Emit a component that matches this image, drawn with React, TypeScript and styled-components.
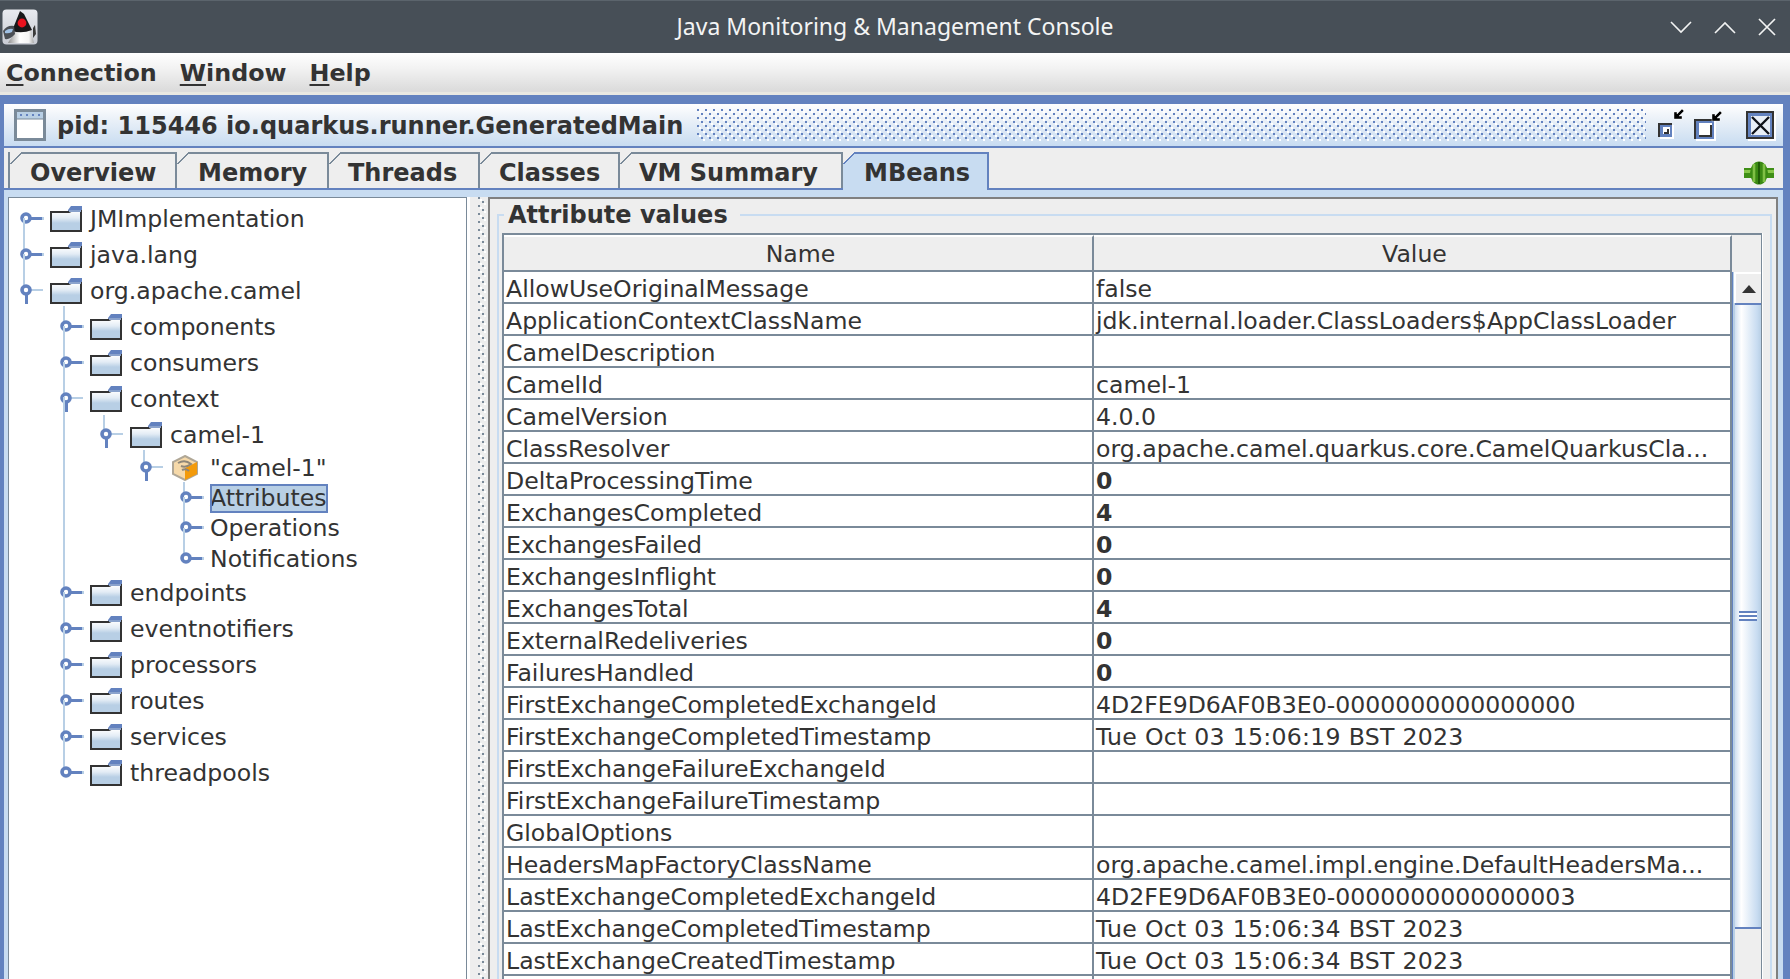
import React from 'react';
import styled, { createGlobalStyle } from 'styled-components';

const BLUE = '#6382bf';
const LIGHT = '#b8cfe5';
const PALE = '#c8dcf1';
const GREY = '#7a8a99';
const INK = '#333333';
const SANS = '"DejaVu Sans", sans-serif';

const Global = createGlobalStyle`
  html, body { margin: 0; padding: 0; background: #eeeeee; overflow: hidden; }
  * { box-sizing: border-box; }
`;

const Screen = styled.div`
  width: 1790px;
  height: 979px;
  overflow: hidden;
  display: flex;
  flex-direction: column;
  font-family: ${SANS};
  color: ${INK};
`;

const TitleBar = styled.header`
  flex: 0 0 53px;
  position: relative;
  display: flex;
  align-items: center;
  justify-content: space-between;
  padding: 0 14px 0 2px;
  background: #474f57;
  border-top: 1px solid #5b646c;
`;

const TitleText = styled.div`
  position: absolute;
  left: 0;
  right: 0;
  top: 10px;
  text-align: center;
  font: 23px/30px "Noto Sans", sans-serif;
  color: #f3f4f4;
`;

const WindowButtons = styled.div`
  display: flex;
  gap: 22px;
  align-items: center;
`;

const MenuBar = styled.nav`
  flex: 0 0 42px;
  display: flex;
  align-items: center;
  gap: 23px;
  padding: 0 6px;
  background: linear-gradient(#ffffff, #f2f2f2 40%, #dcdcdc 95%);
  border-bottom: 3px solid #e9e8e2;
  font: bold 23.8px/30px ${SANS};
`;

const Mnemonic = styled.span`
  text-decoration: underline;
  text-decoration-thickness: 2px;
  text-underline-offset: 3px;
`;

const Desktop = styled.main`
  flex: 1;
  min-height: 0;
  padding: 9px 7px 0 4px;
  background: ${BLUE};
`;

const Frame = styled.section`
  height: 100%;
  display: flex;
  flex-direction: column;
  background: #eeeeee;
`;

const FrameTitle = styled.div`
  flex: 0 0 44px;
  display: flex;
  align-items: center;
  padding: 0 7px 0 10px;
  background: linear-gradient(#ffffff, #eef3f9 30%, ${PALE});
  border-bottom: 2px solid ${BLUE};
`;

const FrameName = styled.div`
  margin-left: 11px;
  padding-top: 2px;
  font: bold 24px/30px ${SANS};
  white-space: nowrap;
`;

const Bumps = styled.div<{ $dot: string }>`
  background-image:
    conic-gradient(from 270deg at 2px 2px, ${p => p.$dot} 25%, transparent 0),
    conic-gradient(from 270deg at 2px 2px, ${p => p.$dot} 25%, transparent 0),
    conic-gradient(from 270deg at 2px 2px, #ffffff 25%, transparent 0),
    conic-gradient(from 270deg at 2px 2px, #ffffff 25%, transparent 0);
  background-size: 8px 8px;
  background-position: 0 0, 4px 4px, 2px 2px, 6px 6px;
`;

const TitleBumps = styled(Bumps)`
  flex: 1;
  height: 32px;
  margin: 0 12px 0 14px;
`;

const FrameIcons = styled.div`
  display: flex;
  align-items: flex-start;
  gap: 8px;
`;

const CloseSlot = styled.div`
  display: flex;
  margin-left: 14px;
`;

const TabBar = styled.div`
  flex: 0 0 42px;
  display: flex;
  align-items: flex-end;
  padding: 4px 9px 0 4px;
  background: #eeeeee;
  border-bottom: 2px solid ${BLUE};
`;

const Tab = styled.div<{ $active?: boolean; $width: number; $pad: number }>`
  position: relative;
  width: ${p => p.$width}px;
  height: ${p => (p.$active ? 38 : 36)}px;
  margin-bottom: ${p => (p.$active ? -2 : 0)}px;
  padding: 4px 0 0 ${p => p.$pad}px;
  background: ${p => (p.$active ? PALE : '#eeeeee')};
  border-top: 2px solid ${p => (p.$active ? BLUE : GREY)};
  border-right: 2px solid ${p => (p.$active ? BLUE : GREY)};
  font: bold 24px/30px ${SANS};
  white-space: nowrap;
  &::before {
    content: '';
    position: absolute;
    left: 0;
    top: -2px;
    width: 12px;
    height: 12px;
    background: linear-gradient(135deg, #eeeeee 46%, ${p => (p.$active ? BLUE : GREY)} 46%, ${p => (p.$active ? BLUE : GREY)} 58%, transparent 58%);
  }
`;

const FirstTab = styled(Tab)`
  border-left: 2px solid ${GREY};
`;

const PlugSlot = styled.div`
  display: flex;
  margin: 0 0 3px auto;
`;

const Content = styled.div`
  flex: 1;
  min-height: 0;
  display: flex;
  padding: 7px 5px 0 4px;
  background: ${PALE};
`;

const TreePane = styled.div`
  flex: 0 0 459px;
  padding-top: 3px;
  background: #ffffff;
  border-top: 1px solid ${GREY};
  border-left: 1px solid ${GREY};
  border-right: 1px solid ${GREY};
`;

const TreeRow = styled.div<{ $level: number; $height: number }>`
  height: ${p => p.$height}px;
  display: flex;
  align-items: center;
  padding-left: ${p => 10 + p.$level * 40}px;
  font: 23.6px/30px ${SANS};
  white-space: nowrap;
`;

const RowIcon = styled.span<{ $gap: number }>`
  display: flex;
  margin-right: ${p => p.$gap}px;
`;

const TreeLabel = styled.span<{ $selected?: boolean }>`
  display: block;
  height: 29px;
  line-height: 29px;
  padding-right: 2px;
  margin-top: 1px;
  background: ${p => (p.$selected ? LIGHT : 'transparent')};
  outline: ${p => (p.$selected ? `2px solid ${BLUE}` : 'none')};
  outline-offset: -2px;
`;

const Divider = styled(Bumps)`
  flex: 0 0 21px;
  background-color: #eeeeee;
  background-position: 8px 0, 12px 4px, 10px 2px, 14px 6px;
  background-repeat: repeat-y;
  background-size: 8px 8px;
  border-left: 3px solid #ffffff;
`;

const AttributesPane = styled.div`
  flex: 1;
  min-width: 0;
  padding: 0 4px 0 7px;
  background: #eeeeee;
  border-top: 2px solid #808080;
  border-left: 2px solid #808080;
  border-right: 2px solid #808080;
`;

const GroupBox = styled.fieldset`
  margin: 0;
  padding: 3px 8px 0 3px;
  height: 800px;
  min-width: 0;
  border: 2px solid ${PALE};
  border-bottom: 0;
`;

const GroupTitle = styled.legend`
  margin-left: 2px;
  padding: 1px 12px 0 4px;
  font: bold 24px/30px ${SANS};
  white-space: nowrap;
`;

const AttrTable = styled.div`
  border-top: 2px solid ${GREY};
  border-left: 2px solid ${GREY};
  border-right: 1px solid ${GREY};
  box-shadow: 1px 0 0 #ffffff;
`;

const HeaderRow = styled.div`
  display: grid;
  grid-template-columns: 590px 638px 1fr;
  height: 37px;
`;

const HeaderCell = styled.div`
  padding: 2px 0 0 5px;
  border-right: 2px solid ${GREY};
  border-bottom: 2px solid ${GREY};
  border-top: 2px solid #ffffff;
  text-align: center;
  font: 23.6px/31px ${SANS};
`;

const TableBody = styled.div`
  display: flex;
`;

const Rows = styled.div`
  flex: 0 0 1228px;
`;

const Row = styled.div`
  display: grid;
  grid-template-columns: 590px 638px;
  height: 32px;
  background: #ffffff;
  border-bottom: 2px solid ${GREY};
`;

const Cell = styled.div<{ $strong?: boolean; $track?: number }>`
  padding: 0 0 0 2px;
  border-right: 2px solid ${GREY};
  font: ${p => (p.$strong ? 'bold' : 'normal')} 23.6px/34px ${SANS};
  letter-spacing: ${p => p.$track ?? 0}px;
  white-space: nowrap;
  overflow: hidden;
`;

const ScrollBar = styled.div`
  flex: 1;
  display: flex;
  flex-direction: column;
  padding-left: 2px;
  background: linear-gradient(90deg, ${LIGHT} 0, ${LIGHT} 2px, #eeeeee 2px);
  border-left: 1px solid ${BLUE};
`;

const ScrollUp = styled.div`
  height: 31px;
  display: flex;
  align-items: center;
  justify-content: center;
  margin-left: -1px;
  background: #eeeeee;
  border-left: 2px solid #ffffff;
  border-top: 2px solid #ffffff;
`;

const ScrollThumb = styled.div`
  height: 626px;
  display: flex;
  align-items: center;
  justify-content: center;
  background: linear-gradient(90deg, #cfdff1, #ffffff 24%, ${PALE} 85%, ${LIGHT});
  border-top: 2px solid ${BLUE};
  border-bottom: 2px solid ${BLUE};
`;

const Grip = styled.div`
  width: 18px;
  height: 10px;
  background: repeating-linear-gradient(${BLUE} 0, ${BLUE} 2px, #ffffff 2px, #ffffff 4px);
`;

const ChevronIcon = ({ up }: { up?: boolean }) => (
  <svg width="22" height="14" viewBox="0 0 22 14" fill="none" stroke="#f2f3f3" strokeWidth="1.6">
    <path d={up ? 'M1 13 L11 3 L21 13' : 'M1 2 L11 12 L21 2'} />
  </svg>
);

const CloseIcon = () => (
  <svg width="18" height="18" viewBox="0 0 18 18" fill="none" stroke="#f2f3f3" strokeWidth="1.7">
    <path d="M1 1 L17 17 M17 1 L1 17" />
  </svg>
);

const DukeIcon = () => (
  <svg width="36" height="36" viewBox="0 0 36 36">
    <defs>
      <linearGradient id="dukeBg" x1="0" y1="0" x2="0" y2="1">
        <stop offset="0" stopColor="#e8eaef" />
        <stop offset="1" stopColor="#c8cbd3" />
      </linearGradient>
      <linearGradient id="dukeBody" x1="0" y1="0" x2="1" y2="0">
        <stop offset="0" stopColor="#8f8f8f" />
        <stop offset="0.45" stopColor="#ffffff" />
        <stop offset="0.8" stopColor="#f4f4f4" />
        <stop offset="1" stopColor="#a8a8a8" />
      </linearGradient>
    </defs>
    <rect x="0.5" y="0.5" width="35" height="35" rx="4" fill="url(#dukeBg)" />
    <path d="M12 20 C12 27 8 30 6 34 H32 C31 29 29 25 29 20 Z" fill="url(#dukeBody)" />
    <path d="M10 22 L18 2 L22 5 L30 21 Q20 25 10 22 Z" fill="#18181a" />
    <circle cx="20" cy="14" r="4.4" fill="#e8121e" />
    <path d="M1 22 Q5 16 12 17 L13 25 Q8 31 3 30 Z" fill="#4b4f55" />
    <path d="M3 22 Q7 19 11 20 L10 23 Q6 25 3 24 Z" fill="#9fc0e4" />
    <path d="M31 19 L33 16 L34 25 L31 29 Z" fill="#3a3a3a" />
  </svg>
);

const WindowGlyph = () => (
  <svg width="32" height="32" viewBox="0 0 32 32">
    <rect x="1.5" y="1.5" width="29" height="29" fill="#ffffff" stroke={GREY} strokeWidth="3" />
    <rect x="3" y="3" width="26" height="7" fill={LIGHT} />
    <path d="M6 5h2v2H6zM12 5h2v2h-2zM18 5h2v2h-2zM24 5h2v2h-2z" fill={BLUE} />
    <path d="M3 10h26" stroke={GREY} strokeWidth="1" />
  </svg>
);

// small arrow of the iconify and maximize buttons
const CornerArrow = ({ x, y }: { x: number; y: number }) => (
  <path
    transform={`translate(${x} ${y})`}
    d="M0 3 H3 V5 L8 0 L10 2 L5 7 H8 V10 H0 Z"
    fill="#000000"
    stroke="#ffffff"
    strokeWidth="0.4"
  />
);

const IconifyGlyph = () => (
  <svg width="28" height="32" viewBox="0 0 28 32">
    <CornerArrow x={16} y={0} />
    <rect x="2" y="16" width="14" height="14" fill="#ffffff" />
    <rect x="0" y="14" width="14" height="14" fill={INK} />
    <rect x="2" y="16" width="12" height="12" fill={BLUE} />
    <rect x="5" y="18" width="7" height="7" fill="#ffffff" />
    <path d="M10 20 V24 H6" fill="none" stroke={INK} strokeWidth="2" />
  </svg>
);

const MaximizeGlyph = () => (
  <svg width="30" height="32" viewBox="0 0 30 32">
    <rect x="2" y="12" width="20" height="20" fill="#ffffff" />
    <rect x="0" y="10" width="20" height="20" fill={INK} />
    <rect x="2" y="12" width="18" height="18" fill={BLUE} />
    <rect x="5" y="14" width="13" height="12" fill="#ffffff" />
    <path d="M17 16 V27 H5" fill="none" stroke={INK} strokeWidth="2" />
    <CornerArrow x={18} y={2} />
  </svg>
);

const CloseGlyph = () => (
  <svg width="30" height="32" viewBox="0 0 30 32">
    <rect x="2" y="4" width="28" height="28" fill="#ffffff" />
    <rect x="0" y="2" width="28" height="28" fill={INK} />
    <rect x="2" y="4" width="24" height="24" fill={BLUE} />
    <rect x="5" y="7" width="19" height="19" fill="#e9eff7" />
    <path d="M6 8 L23 25 M23 8 L6 25" stroke="#10131a" strokeWidth="2.4" />
  </svg>
);

const PlugGlyph = () => (
  <svg width="30" height="24" viewBox="0 0 30 24">
    <rect x="0" y="7" width="30" height="10" fill="#3f8f16" />
    <rect x="0" y="9" width="30" height="3" fill="#86c74a" />
    <ellipse cx="15" cy="12" rx="9" ry="11.5" fill="#3b8a14" />
    <path d="M10 3 V21 M20 3 V21" stroke="#7fc045" strokeWidth="2.6" />
    <path d="M15 1 V23" stroke="#1f5c08" strokeWidth="2" />
  </svg>
);

const UpArrow = () => (
  <svg width="14" height="8" viewBox="0 0 14 8">
    <path d="M7 0 L14 8 H0 Z" fill={INK} />
  </svg>
);

const FolderGlyph = () => (
  <svg width="32" height="26" viewBox="0 0 32 26" style={{ flex: 'none' }}>
    <defs>
      <linearGradient id="folderFill" x1="0" y1="0" x2="0" y2="1">
        <stop offset="0" stopColor="#ffffff" />
        <stop offset="0.35" stopColor="#e3ecf5" />
        <stop offset="0.6" stopColor={LIGHT} />
        <stop offset="1" stopColor={LIGHT} />
      </linearGradient>
    </defs>
    <path d="M18 4 L21 0 H32 V5 H18 Z" fill={BLUE} />
    <path d="M1 6 H19 L21 5 H31 V25 H1 Z" fill="url(#folderFill)" stroke="#333" strokeWidth="2" />
    <path d="M19 5 H31" stroke="#8aa2cc" strokeWidth="2" />
  </svg>
);

const BeanGlyph = () => (
  <svg width="26" height="26" viewBox="0 0 26 26" style={{ flex: 'none' }}>
    <path d="M13 1 L25 7 V19 L13 25 L1 19 V7 Z" fill="#f6d9a9" stroke="#b0a796" strokeWidth="2" />
    <path d="M13 13 L25 7 V19 L13 25 Z" fill="#f39a0a" />
    <path d="M6 8 Q13 4 19 9 Q14 13 9 11 M10 15 Q14 13 17 16" fill="none" stroke="#8f8779" strokeWidth="2" />
  </svg>
);

// one connector: the knob, its stem and the light line up to the previous sibling
const Handle = ({ open, rise = 0, h }: { open?: boolean; rise?: number; h: number }) => {
  const cy = Math.round(h / 2) - 1;
  return (
    <svg width="26" height={h} viewBox={`0 0 26 ${h}`} style={{ overflow: 'visible', flex: 'none' }}>
      {rise > 0 && <rect x="4" y={cy - rise} width="2" height={rise} fill={LIGHT} />}
      {open ? (
        <>
          <rect x="12" y={cy - 1} width="12" height="2" fill={LIGHT} />
          <rect x="6" y={cy + 2} width="3" height="12" fill={BLUE} />
        </>
      ) : (
        <>
          <rect x="12" y={cy - 1} width="11" height="3" fill={BLUE} />
          <rect x="23" y={cy - 1} width="2" height="3" fill={LIGHT} />
        </>
      )}
      <circle cx="7" cy={cy} r="4" fill="#ffffff" stroke={BLUE} strokeWidth="3.6" />
    </svg>
  );
};

type Node = {
  label: string;
  level: number;
  kind: 'folder' | 'bean' | 'leaf';
  open?: boolean;
  rise?: number;
  h?: number;
  selected?: boolean;
};

const tree: Node[] = [
  { label: 'JMImplementation', level: 0, kind: 'folder' },
  { label: 'java.lang', level: 0, kind: 'folder', rise: 36 },
  { label: 'org.apache.camel', level: 0, kind: 'folder', open: true, rise: 36 },
  { label: 'components', level: 1, kind: 'folder', rise: 20 },
  { label: 'consumers', level: 1, kind: 'folder', rise: 36 },
  { label: 'context', level: 1, kind: 'folder', open: true, rise: 36 },
  { label: 'camel-1', level: 2, kind: 'folder', open: true, rise: 19 },
  { label: '"camel-1"', level: 3, kind: 'bean', open: true, rise: 17, h: 30 },
  { label: 'Attributes', level: 4, kind: 'leaf', rise: 15, h: 30, selected: true },
  { label: 'Operations', level: 4, kind: 'leaf', rise: 30, h: 30 },
  { label: 'Notifications', level: 4, kind: 'leaf', rise: 30, h: 32 },
  { label: 'endpoints', level: 1, kind: 'folder', rise: 195 },
  { label: 'eventnotifiers', level: 1, kind: 'folder', rise: 36 },
  { label: 'processors', level: 1, kind: 'folder', rise: 36 },
  { label: 'routes', level: 1, kind: 'folder', rise: 36 },
  { label: 'services', level: 1, kind: 'folder', rise: 36 },
  { label: 'threadpools', level: 1, kind: 'folder', rise: 36 },
];

const attributes: [string, string, boolean?][] = [
  ['AllowUseOriginalMessage', 'false'],
  ['ApplicationContextClassName', 'jdk.internal.loader.ClassLoaders$AppClassLoader'],
  ['CamelDescription', ''],
  ['CamelId', 'camel-1'],
  ['CamelVersion', '4.0.0'],
  ['ClassResolver', 'org.apache.camel.quarkus.core.CamelQuarkusCla...'],
  ['DeltaProcessingTime', '0', true],
  ['ExchangesCompleted', '4', true],
  ['ExchangesFailed', '0', true],
  ['ExchangesInflight', '0', true],
  ['ExchangesTotal', '4', true],
  ['ExternalRedeliveries', '0', true],
  ['FailuresHandled', '0', true],
  ['FirstExchangeCompletedExchangeId', '4D2FE9D6AF0B3E0-0000000000000000'],
  ['FirstExchangeCompletedTimestamp', 'Tue Oct 03 15:06:19 BST 2023'],
  ['FirstExchangeFailureExchangeId', ''],
  ['FirstExchangeFailureTimestamp', ''],
  ['GlobalOptions', ''],
  ['HeadersMapFactoryClassName', 'org.apache.camel.impl.engine.DefaultHeadersMa...'],
  ['LastExchangeCompletedExchangeId', '4D2FE9D6AF0B3E0-0000000000000003'],
  ['LastExchangeCompletedTimestamp', 'Tue Oct 03 15:06:34 BST 2023'],
  ['LastExchangeCreatedTimestamp', 'Tue Oct 03 15:06:34 BST 2023'],
  ['', ''],
];

const tabs = [
  { label: 'Memory', width: 152, pad: 21 },
  { label: 'Threads', width: 151, pad: 19 },
  { label: 'Classes', width: 140, pad: 19 },
  { label: 'VM Summary', width: 223, pad: 19 },
];

const App = () => {
  return (
    <Screen>
      <Global />
      <TitleBar>
        <DukeIcon />
        <TitleText>Java Monitoring &amp; Management Console</TitleText>
        <WindowButtons>
          <ChevronIcon />
          <ChevronIcon up />
          <CloseIcon />
        </WindowButtons>
      </TitleBar>
      <MenuBar>
        <span><Mnemonic>C</Mnemonic>onnection</span>
        <span><Mnemonic>W</Mnemonic>indow</span>
        <span><Mnemonic>H</Mnemonic>elp</span>
      </MenuBar>
      <Desktop>
        <Frame>
          <FrameTitle>
            <WindowGlyph />
            <FrameName>pid: 115446 io.quarkus.runner.GeneratedMain</FrameName>
            <TitleBumps $dot={BLUE} />
            <FrameIcons>
              <IconifyGlyph />
              <MaximizeGlyph />
              <CloseSlot><CloseGlyph /></CloseSlot>
            </FrameIcons>
          </FrameTitle>
          <TabBar>
            <FirstTab $width={169} $pad={20}>Overview</FirstTab>
            {tabs.map(t => (
              <Tab key={t.label} $width={t.width} $pad={t.pad}>{t.label}</Tab>
            ))}
            <Tab $active $width={146} $pad={21}>MBeans</Tab>
            <PlugSlot><PlugGlyph /></PlugSlot>
          </TabBar>
          <Content>
            <TreePane>
              {tree.map(n => {
                const h = n.h ?? 36;
                const gap = n.kind === 'bean' ? 7 : 5;
                return (
                  <TreeRow key={n.label + n.level} $level={n.level} $height={h}>
                    <RowIcon $gap={gap}>
                      <Handle open={n.open} rise={n.rise} h={h} />
                    </RowIcon>
                    {n.kind === 'folder' && <RowIcon $gap={8}><FolderGlyph /></RowIcon>}
                    {n.kind === 'bean' && <RowIcon $gap={12}><BeanGlyph /></RowIcon>}
                    <TreeLabel $selected={n.selected}>{n.label}</TreeLabel>
                  </TreeRow>
                );
              })}
            </TreePane>
            <Divider $dot={GREY} />
            <AttributesPane>
              <GroupBox>
                <GroupTitle>Attribute values</GroupTitle>
                <AttrTable>
                  <HeaderRow>
                    <HeaderCell>Name</HeaderCell>
                    <HeaderCell>Value</HeaderCell>
                  </HeaderRow>
                  <TableBody>
                    <Rows>
                      {attributes.map(([name, value, strong], i) => (
                        <Row key={name + i}>
                          <Cell>{name}</Cell>
                          <Cell $strong={strong} $track={value.startsWith('Tue') ? 0.28 : 0}>{value}</Cell>
                        </Row>
                      ))}
                    </Rows>
                    <ScrollBar>
                      <ScrollUp><UpArrow /></ScrollUp>
                      <ScrollThumb><Grip /></ScrollThumb>
                    </ScrollBar>
                  </TableBody>
                </AttrTable>
              </GroupBox>
            </AttributesPane>
          </Content>
        </Frame>
      </Desktop>
    </Screen>
  );
};

export default App;
